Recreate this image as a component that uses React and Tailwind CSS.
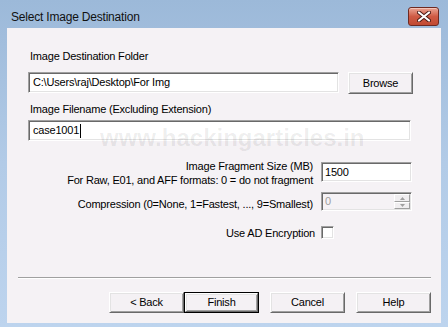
import React from "react";

const font = { fontFamily: '"Liberation Sans", Arial, sans-serif' };

function Sunken({ className = "", children }) {
  return (
    <div
      className={
        "flex items-center border border-t-[#a0a0a0] border-l-[#a0a0a0] border-b-white border-r-white shadow-[inset_1px_1px_0_#696969,inset_-1px_-1px_0_#e3e3e3] " +
        className
      }
    >
      {children}
    </div>
  );
}

function Btn({ children, className = "", isDefault = false }) {
  const inner = (
    <div className="flex h-full w-full items-center justify-center border border-t-white border-l-white border-b-[#696969] border-r-[#696969] bg-[#f4f1f4] shadow-[inset_1px_1px_0_#e3e3e3,inset_-1px_-1px_0_#a0a0a0]">
      {children}
    </div>
  );
  if (isDefault) {
    return <div className={"border border-black " + className}>{inner}</div>;
  }
  return <div className={className}>{inner}</div>;
}

export default function App() {
  return (
    <div
      className="relative flex h-[327px] w-[448px] flex-col overflow-hidden bg-gradient-to-b from-[#9cb9d9] via-[#b2cbe7] to-[#bdd4ee] text-[11px] tracking-[-0.2px] text-black"
      style={font}
    >
      {/* Title bar */}
      <div className="flex h-[28px] shrink-0 items-start justify-between">
        <div className="ml-[11px] mt-[10px] text-[12px] leading-[14px] text-[#111]">
          Select Image Destination
        </div>
        <div className="mr-[9px] mt-[7px] flex h-[19px] w-[31px] items-center justify-center rounded-[3px] border border-[#6e2a22] bg-gradient-to-b from-[#e8a393] via-[#cf5a44] to-[#c14a32] shadow-[inset_0_1px_0_#f4c4b8]">
          <svg width="14" height="11" viewBox="0 0 14 11">
            <path
              d="M2 1.5 L12 9.5 M12 1.5 L2 9.5"
              stroke="#4a1a14"
              strokeWidth="4"
              strokeLinecap="round"
            />
            <path
              d="M2 1.5 L12 9.5 M12 1.5 L2 9.5"
              stroke="#ffffff"
              strokeWidth="2.2"
              strokeLinecap="round"
            />
          </svg>
        </div>
      </div>

      {/* Client area */}
      <div className="mx-[7px] h-[295px] shrink-0 bg-[#f5f2f5]">
        <div className="flex flex-col pl-[21px] pt-[22px]">
          <div className="ml-[2px] leading-[13px]">Image Destination Folder</div>
          <div className="mt-[9px] flex h-[22px] items-start">
            <Sunken className="h-[21px] w-[311px] bg-white pl-[4px]">
              C:\Users\raj\Desktop\For Img
            </Sunken>
            <Btn className="ml-[9px] h-[22px] w-[65px]">Browse</Btn>
          </div>
          <div className="ml-[2px] mt-[9px] leading-[13px]">
            Image Filename (Excluding Extension)
          </div>
          <Sunken className="mt-[4px] h-[21px] w-[383px] bg-white pl-[4px]">
            <span>case1001</span>
            <span className="ml-[1px] inline-block h-[14px] w-[1px] bg-black" />
          </Sunken>
        </div>

        <div className="mt-[18px] flex items-start justify-end pr-[29px]">
          <div className="text-right leading-[14px]">
            <div>Image Fragment Size (MB)</div>
            <div>For Raw, E01, and AFF formats: 0 = do not fragment</div>
          </div>
          <Sunken className="ml-[8px] mt-[3px] h-[20px] w-[91px] bg-white pl-[3px]">
            1500
          </Sunken>
        </div>

        <div className="mt-[5px] flex items-start justify-end pr-[29px]">
          <div className="mt-[5px] leading-[14px]">
            Compression (0=None, 1=Fastest, ..., 9=Smallest)
          </div>
          <Sunken className="ml-[8px] h-[19px] w-[91px] justify-between bg-[#f5f2f5] pl-[3px] pr-[1px]">
            <span className="text-[#a0a0a0]">0</span>
            <div className="flex h-[15px] w-[16px] flex-col">
              <div className="flex h-[8px] items-center justify-center border border-t-white border-l-white border-b-[#a0a0a0] border-r-[#a0a0a0] bg-[#f0eef0]">
                <svg width="5" height="3" viewBox="0 0 5 3">
                  <path d="M0 3 L2.5 0 L5 3 Z" fill="#a0a0a0" />
                </svg>
              </div>
              <div className="flex h-[7px] items-center justify-center border border-t-white border-l-white border-b-[#a0a0a0] border-r-[#a0a0a0] bg-[#f0eef0]">
                <svg width="5" height="3" viewBox="0 0 5 3">
                  <path d="M0 0 L2.5 3 L5 0 Z" fill="#a0a0a0" />
                </svg>
              </div>
            </div>
          </Sunken>
        </div>

        <div className="mt-[15px] flex h-[13px] items-center justify-end pr-[29px]">
          <div className="mr-[6px] leading-[14px]">Use AD Encryption</div>
          <div className="w-[91px]">
            <Sunken className="h-[13px] w-[13px] bg-white" />
          </div>
        </div>

        <div className="ml-[11px] mt-[38px] h-[2px] w-[413px] border-t border-b border-t-[#a0a0a0] border-b-white" />

        <div className="mt-[13px] flex justify-end pr-[10px]">
          <Btn className="h-[21px] w-[75px]">&lt; Back</Btn>
          <Btn isDefault className="h-[21px] w-[75px]">
            Finish
          </Btn>
          <Btn className="ml-[11px] h-[21px] w-[75px]">Cancel</Btn>
          <Btn className="ml-[11px] h-[21px] w-[75px]">Help</Btn>
        </div>
      </div>

      {/* Watermark */}
      <div className="pointer-events-none absolute left-[100px] top-[126px] text-[24px] font-bold leading-none tracking-normal text-black/[0.07]">
        www.hackingarticles.in
      </div>
    </div>
  );
}
